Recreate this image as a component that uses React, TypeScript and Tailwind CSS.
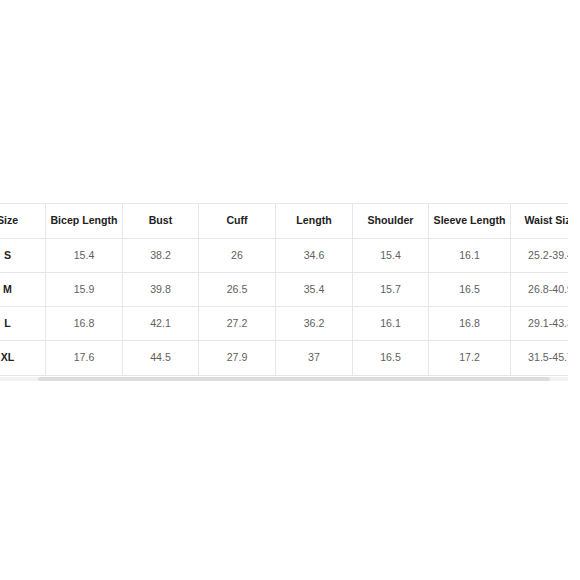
const headers = ["Size", "Bicep Length", "Bust", "Cuff", "Length", "Shoulder", "Sleeve Length", "Waist Size"];
const widths = ["w-[76px]", "w-[77px]", "w-[76px]", "w-[77px]", "w-[77px]", "w-[76px]", "w-[82px]", "w-[80px]"];

const rows = [
  ["S", "15.4", "38.2", "26", "34.6", "15.4", "16.1", "25.2-39.4"],
  ["M", "15.9", "39.8", "26.5", "35.4", "15.7", "16.5", "26.8-40.9"],
  ["L", "16.8", "42.1", "27.2", "36.2", "16.1", "16.8", "29.1-43.3"],
  ["XL", "17.6", "44.5", "27.9", "37", "16.5", "17.2", "31.5-45.7"],
];

function App() {
  return (
    <div className="w-[580px] h-[580px] bg-white pt-[203px] font-['Liberation_Sans',Arial,sans-serif]">
      <div className="w-[568px] overflow-hidden">
        <table className="ml-[-31px] w-[621px] min-w-[621px] border-collapse table-fixed text-[10.6px]">
          <thead>
            <tr className="h-[35px]">
              {headers.map((h, i) => (
                <th
                  key={h}
                  className={`${widths[i]} border border-[#e6e6e6] text-center font-bold text-[#222] whitespace-nowrap p-0`}
                >
                  {h}
                </th>
              ))}
            </tr>
          </thead>
          <tbody>
            {rows.map((r, ri) => (
              <tr key={ri} className={ri === 3 ? "h-[35px]" : "h-[34px]"}>
                {r.map((c, i) => (
                  <td
                    key={i}
                    className={`border border-[#e6e6e6] text-center whitespace-nowrap p-0 ${
                      i === 0 ? "font-bold text-[#222]" : "text-[#5f5f5f]"
                    }`}
                  >
                    {c}
                  </td>
                ))}
              </tr>
            ))}
          </tbody>
        </table>
        {/* horizontal scrollbar */}
        <div className="mt-[1px] h-[4px] w-[568px] bg-[#f2f2f2]">
          <div className="ml-[38px] h-full w-[512px] rounded-full bg-[#dcdcdc]" />
        </div>
      </div>
    </div>
  );
}

export default App;
